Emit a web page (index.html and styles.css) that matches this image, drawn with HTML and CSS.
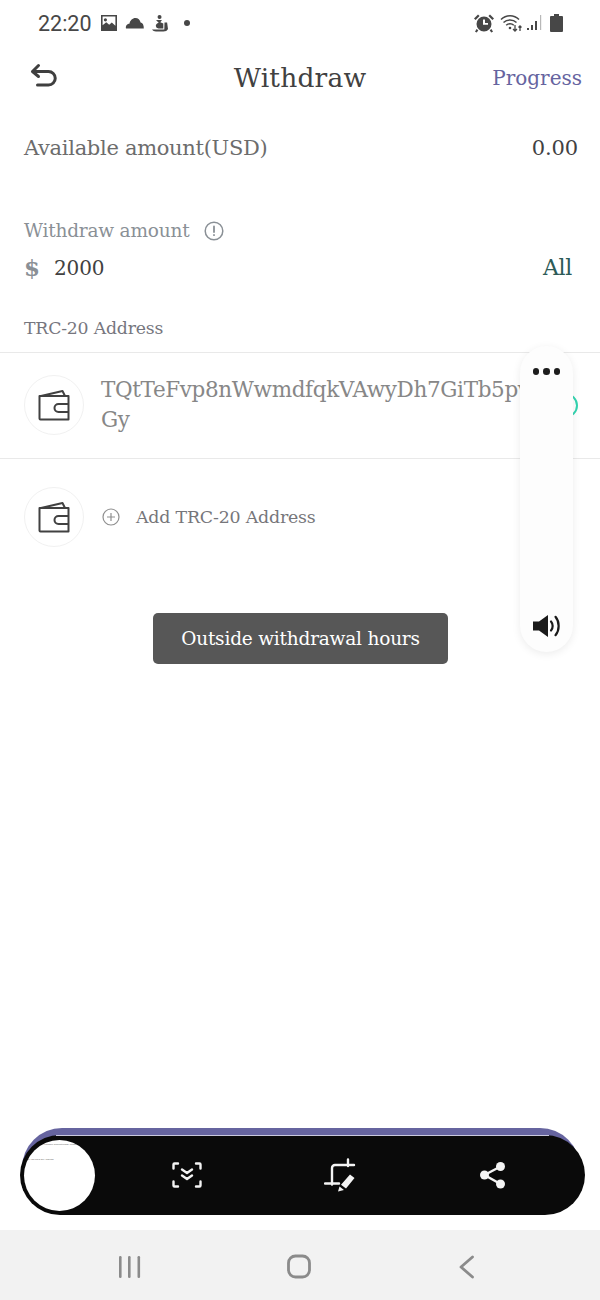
FILE: index.html
```html
<!DOCTYPE html>
<html lang="en">
<head>
<meta charset="utf-8">
<title>Withdraw</title>
<link rel="stylesheet" href="styles.css">
</head>
<body>
<div class="page">
  <div class="status">
    <div class="status-left">
      <span class="clock">22:20</span>
      <svg class="si" width="18" height="18" viewBox="0 0 18 18"><path fill="#474747" fill-rule="evenodd" d="M1 1h16v16H1zM2.600 2.600v8.600l3.600-3 3 2.600 2.600-2.400 3.600 3.400V2.600zM5.400 4.200a1.600 1.600 0 1 1 0 3.200 1.600 1.600 0 0 1 0-3.200z"/></svg>
      <svg class="si" width="20" height="12" viewBox="0 0 20 12"><path fill="#474747" d="M1 11.500c-.6-2.600 1-4.600 3.400-4.700C5.200 3.200 7.600 1 10.400 1c2.800 0 4.600 2 5.200 4.400 2 .2 3.400 2.500 3.200 6.100z"/></svg>
      <svg class="si" width="16" height="18" viewBox="0 0 16 18"><path fill="#474747" d="M7.500 1a2 2 0 1 1 .1 4 2 2 0 0 1-.1-4zM4 6h6L8.300 8.200l3 1.400v5H6.500a2.800 2.800 0 0 1-2.700-2.500c0-1.500 1.100-2.600 2.900-3.300zM12.500 8.500h2.600l.9 6.500c-.8 1.700-2.400 2.500-4.600 2.500H4c-1.800 0-3.200-.7-4-2h12.300z"/></svg>
      <span class="dot"></span>
    </div>
    <div class="status-right">
      <svg width="22" height="20" viewBox="0 0 22 20"><path fill="#474747" fill-rule="evenodd" d="M11 3.500a7.500 7.500 0 1 1 0 15 7.500 7.500 0 0 1 0-15zM10 6.500V11.800h5V10h-3V6.500zM1 5.500 5 1.500l1.600 1.500-4 4zM21 5.500 17 1.500l-1.600 1.500 4 4zM3.500 16l1.800 1.200-1.500 2.300-1.800-.8zM18.500 16l-1.800 1.200 1.500 2.300 1.800-.8z"/></svg>
      <svg width="22" height="20" viewBox="0 0 22 20" fill="none" stroke="#474747" stroke-width="1.500"><path d="M1 6.500C6 1.500 14 1.500 19 6.500M3.500 9.500c3.500-3.500 9.500-3.500 13 0M6.200 12.300c2-2 5.600-2 7.600 0"/><path stroke-width="1.300" d="M15 12v6M13 16l2 2 2-2M20 18v-5M18.500 14.500 20 13l1.500 1.500"/><circle cx="10" cy="15" r="1.300" fill="#474747" stroke="none"/></svg>
      <svg width="16" height="18" viewBox="0 0 16 18"><path fill="#474747" d="M0 14h2v2H0zM4 11h2v5H4zM8 7h2v9H8z"/><path fill="#b8b8b8" d="M13 1h1.200v15H13z"/></svg>
      <svg class="batt" width="13" height="18" viewBox="0 0 13 18"><path fill="#474747" d="M4 0h5v2h3a1 1 0 0 1 1 1v14a1 1 0 0 1-1 1H1a1 1 0 0 1-1-1V3a1 1 0 0 1 1-1h3z"/></svg>
    </div>
  </div>

  <header class="topbar">
    <svg class="back" width="30" height="30" viewBox="0 0 30 30" fill="none" stroke="#3f3f3f" stroke-width="3" stroke-linecap="round" stroke-linejoin="round"><path d="M9.500 3.500 3.500 9.500 9.500 14.500"/><path d="M4 9.500H19.500a6.500 6.500 0 0 1 0 13.500H8.500"/></svg>
    <h1 class="title">Withdraw</h1>
    <a class="progress">Progress</a>
  </header>

  <main class="content">
    <div class="avail">
      <span class="avail-label">Available amount(USD)</span>
      <span class="avail-value">0.00</span>
    </div>
    <div class="amount-label">
      <span>Withdraw amount</span>
      <svg width="20" height="20" viewBox="0 0 20 20" fill="none" stroke="#8a9096" stroke-width="1.500"><circle cx="10" cy="10" r="8.800"/><path stroke-linecap="round" stroke-width="1.800" d="M10 5.500v5.500M10 14v.2"/></svg>
    </div>
    <div class="amount-row">
      <span class="currency">$</span>
      <span class="amount">2000</span>
      <span class="all">All</span>
    </div>
    <div class="addr-label">TRC-20 Address</div>

    <div class="addr-row first">
      <span class="wallet">
        <svg width="32" height="32" viewBox="0 0 32 32" fill="none" stroke="#414141" stroke-width="2" stroke-linejoin="round"><path d="M1.500 7H30.500V30.500H2.500a1 1 0 0 1-1-1z"/><path d="M3 7 24.500 2 27 7"/><path d="M30.500 15H20.500a4 4 0 0 0 0 8H30.500"/></svg>
      </span>
      <span class="addr">TQtTeFvp8nWwmdfqkVAwyDh7GiTb5pvGy</span>
      <span class="ring"></span>
    </div>
    <div class="addr-row add">
      <span class="wallet">
        <svg width="32" height="32" viewBox="0 0 32 32" fill="none" stroke="#414141" stroke-width="2" stroke-linejoin="round"><path d="M1.500 7H30.500V30.500H2.500a1 1 0 0 1-1-1z"/><path d="M3 7 24.500 2 27 7"/><path d="M30.500 15H20.500a4 4 0 0 0 0 8H30.500"/></svg>
      </span>
      <svg class="plus" width="18" height="18" viewBox="0 0 18 18" fill="none" stroke="#8f8f8f" stroke-width="1.200"><circle cx="9" cy="9" r="8"/><path d="M9 5v8M5 9h8"/></svg>
      <span class="add-text">Add TRC-20 Address</span>
    </div>
  </main>

  <nav class="navbar">
    <svg width="24" height="24" viewBox="0 0 24 24" fill="#8b8b8b"><rect x="1" y="1" width="2.600" height="22" rx="1.200"/><rect x="10" y="1" width="2.600" height="22" rx="1.200"/><rect x="19.500" y="1" width="2.600" height="22" rx="1.200"/></svg>
    <svg width="26" height="26" viewBox="0 0 26 26" fill="none" stroke="#8b8b8b" stroke-width="2.800"><rect x="1.500" y="2" width="21" height="21" rx="7"/></svg>
    <svg width="18" height="24" viewBox="0 0 18 24" fill="none" stroke="#8b8b8b" stroke-width="2.800" stroke-linecap="round" stroke-linejoin="round"><path d="M14.500 2 3 12l11.500 10"/></svg>
  </nav>

  <div class="toast">Outside withdrawal hours</div>

  <aside class="float-panel">
    <span class="dots"><i></i><i></i><i></i></span>
    <svg width="28" height="24" viewBox="0 0 28 24"><path fill="#1a1a1a" d="M0 7.500h6L15 1v22l-9-6.500H0z"/><path fill="none" stroke="#1a1a1a" stroke-width="2.200" stroke-linecap="round" d="M18 7.500c2.200 2.500 2.200 6.500 0 9M22.500 2.800c4.200 5 4.200 13.400 0 18.400"/></svg>
  </aside>

  <div class="shot-back"></div>
  <div class="shot-bar">
    <div class="thumb">
      <span class="thumb-a">Available amount(USD) Withdraw</span>
      <span class="thumb-b">$ Add TRC-20 Address</span>
    </div>
    <div class="shot-tools">
      <svg width="32" height="28" viewBox="0 0 32 28" fill="none" stroke="#f4f4f4" stroke-width="2.400" stroke-linecap="round" stroke-linejoin="round"><path d="M2.500 7.500V3.500a1 1 0 0 1 1-1H7M25 2.500h3.500a1 1 0 0 1 1 1v4M2.500 20.500v4a1 1 0 0 0 1 1H7M29.500 20.500v4a1 1 0 0 1-1 1H25"/><path d="M11 8.500 16 12l5-3.500M11 14.500l5 3.500 5-3.500"/></svg>
      <svg width="34" height="34" viewBox="0 0 34 34" fill="none" stroke="#f4f4f4" stroke-width="2.400" stroke-linecap="round"><path d="M24 1.500V5M24 5v3M8 26.500V10a3 3 0 0 1 3-3H30"/><path d="M1 25.500H15"/><path fill="#f4f4f4" stroke="none" d="M26 16.500l4.500 3.500-8.500 10.500-5-3.800zM15.500 28.500l4.500 3.500-6 1.500z"/></svg>
      <svg width="28" height="28" viewBox="0 0 28 28"><g fill="#f4f4f4"><circle cx="21.500" cy="5.500" r="4.500"/><circle cx="5.500" cy="14" r="4.500"/><circle cx="21.500" cy="23" r="4.500"/></g><path fill="none" stroke="#f4f4f4" stroke-width="2.400" d="M21.500 5.500 5.500 14 21.500 23"/></svg>
    </div>
  </div>
</div>
</body>
</html>
```
FILE: styles.css
```css
* { box-sizing: border-box; }
html, body { margin: 0; padding: 0; background: #fff; }
.page {
  position: relative;
  width: 600px;
  height: 1300px;
  overflow: hidden;
  display: flex;
  flex-direction: column;
  font-family: "DejaVu Serif", "Liberation Serif", serif;
  color: #414141;
}
.status {
  height: 46px;
  display: flex;
  justify-content: space-between;
  align-items: center;
  padding: 0 37px 0 38px;
  flex: none;
}
.status-left, .status-right { display: flex; align-items: center; }
.clock { font: 21.500px Roboto, sans-serif; color: #474747; margin-right: 8px; }
.si { margin-right: 7px; }
.dot { width: 6px; height: 6px; border-radius: 50%; background: #474747; margin-left: 9px; }
.status-right { gap: 5px; }
.batt { margin-left: 2px; }
.topbar {
  height: 62px;
  flex: none;
  display: grid;
  grid-template-columns: 1fr auto 1fr;
  align-items: center;
  padding: 0 18px;
}
.title { margin: 0; font-size: 26.500px; font-weight: 400; letter-spacing: .2px; }
.back { margin: 0 0 1px 11px; }
.progress { justify-self: end; font-size: 20px; color: #66649f; padding-top: 2px; }
.content { flex: 1; }
.avail {
  display: flex;
  justify-content: space-between;
  padding: 28px 22px 0 24px;
  font-size: 21px;
  letter-spacing: -.3px;
  color: #6c6c6c;
}
.avail-value { color: #414141; letter-spacing: -.1px; }
.amount-label {
  margin-top: 60px;
  padding-left: 24px;
  display: flex;
  align-items: center;
  gap: 15px;
  font-size: 18.500px;
  letter-spacing: -.2px;
  color: #8a9096;
}
.amount-row {
  display: flex;
  align-items: center;
  padding: 15px 28px 0 24px;
  font-size: 20px;
  line-height: 24px;
}
.currency { color: #8a9096; font-weight: 700; width: 30px; font-size: 23px; }
.amount { flex: 1; color: #414141; letter-spacing: -.1px; }
.all { color: #2c5b57; letter-spacing: -.3px; font-size: 22px; }
.addr-label {
  padding: 38px 0 0 24px;
  height: 72px;
  font-size: 17.300px;
  letter-spacing: -.2px;
  color: #76767e;
}
.addr-row {
  position: relative;
  display: flex;
  align-items: center;
  border-top: 1px solid #e9e9e9;
  padding-left: 24px;
}
.first { height: 106px; padding-bottom: 2px; }
.add { height: 117px; }
.wallet {
  flex: none;
  width: 60px;
  height: 60px;
  border: 1px solid #f1f1f1;
  border-radius: 50%;
  display: flex;
  align-items: center;
  justify-content: center;
}
.addr {
  margin-left: 17px;
  width: 445px;
  font-size: 21.500px;
  line-height: 30px;
  letter-spacing: -.35px;
  color: #878787;
  word-break: break-all;
}
.ring {
  position: absolute;
  left: 553px;
  top: 40px;
  width: 25px;
  height: 25px;
  border: 2px solid #33d4b0;
  border-radius: 50%;
}
.plus { margin-left: 18px; }
.add-text { margin-left: 16px; font-size: 17.400px; letter-spacing: -.2px; color: #76767a; }
.navbar {
  height: 70px;
  flex: none;
  background: #f2f2f2;
  display: flex;
  align-items: center;
  justify-content: space-between;
  padding: 3px 124px 0 118px;
}
.toast {
  position: absolute;
  left: 153px;
  top: 613px;
  width: 295px;
  height: 51px;
  border-radius: 5px;
  background: #575757;
  color: #fff;
  font-size: 18.500px;
  letter-spacing: -.2px;
  display: flex;
  align-items: center;
  justify-content: center;
}
.float-panel {
  position: absolute;
  left: 520px;
  top: 346px;
  width: 53px;
  height: 306px;
  border-radius: 27px;
  background: #fdfdfd;
  box-shadow: 0 2px 8px rgba(0, 0, 0, .08);
  display: flex;
  flex-direction: column;
  justify-content: space-between;
  align-items: center;
  padding: 22px 0 14px;
}
.dots { display: flex; gap: 4px; }
.dots i { width: 6.500px; height: 6.500px; border-radius: 50%; background: #1d1d1d; }
.shot-back {
  position: absolute;
  left: 22px;
  top: 1128px;
  width: 558px;
  height: 60px;
  border-radius: 40px 40px 0 0;
  background: #66649f;
}
.shot-bar {
  position: absolute;
  left: 20px;
  top: 1135px;
  width: 565px;
  height: 80px;
  border-radius: 40px;
  background: #0a0a0a;
  display: flex;
  align-items: center;
  padding: 0 0 0 4px;
}
.shot-bar::before {
  content: "";
  position: absolute;
  left: 36px;
  right: 36px;
  top: 0;
  height: 1px;
  background: #c9c8de;
}
.thumb {
  position: relative;
  width: 71px;
  height: 71px;
  border-radius: 50%;
  background: #fff;
  overflow: hidden;
  flex: none;
}
.thumb span { position: absolute; font: 2.500px "Liberation Sans", sans-serif; color: #666; white-space: nowrap; }
.thumb-a { left: 19px; top: 3px; color: #999; }
.thumb-b { left: 4px; top: 18px; }
.shot-tools { display: flex; align-items: center; gap: 121px; margin-left: 76px; }
```
